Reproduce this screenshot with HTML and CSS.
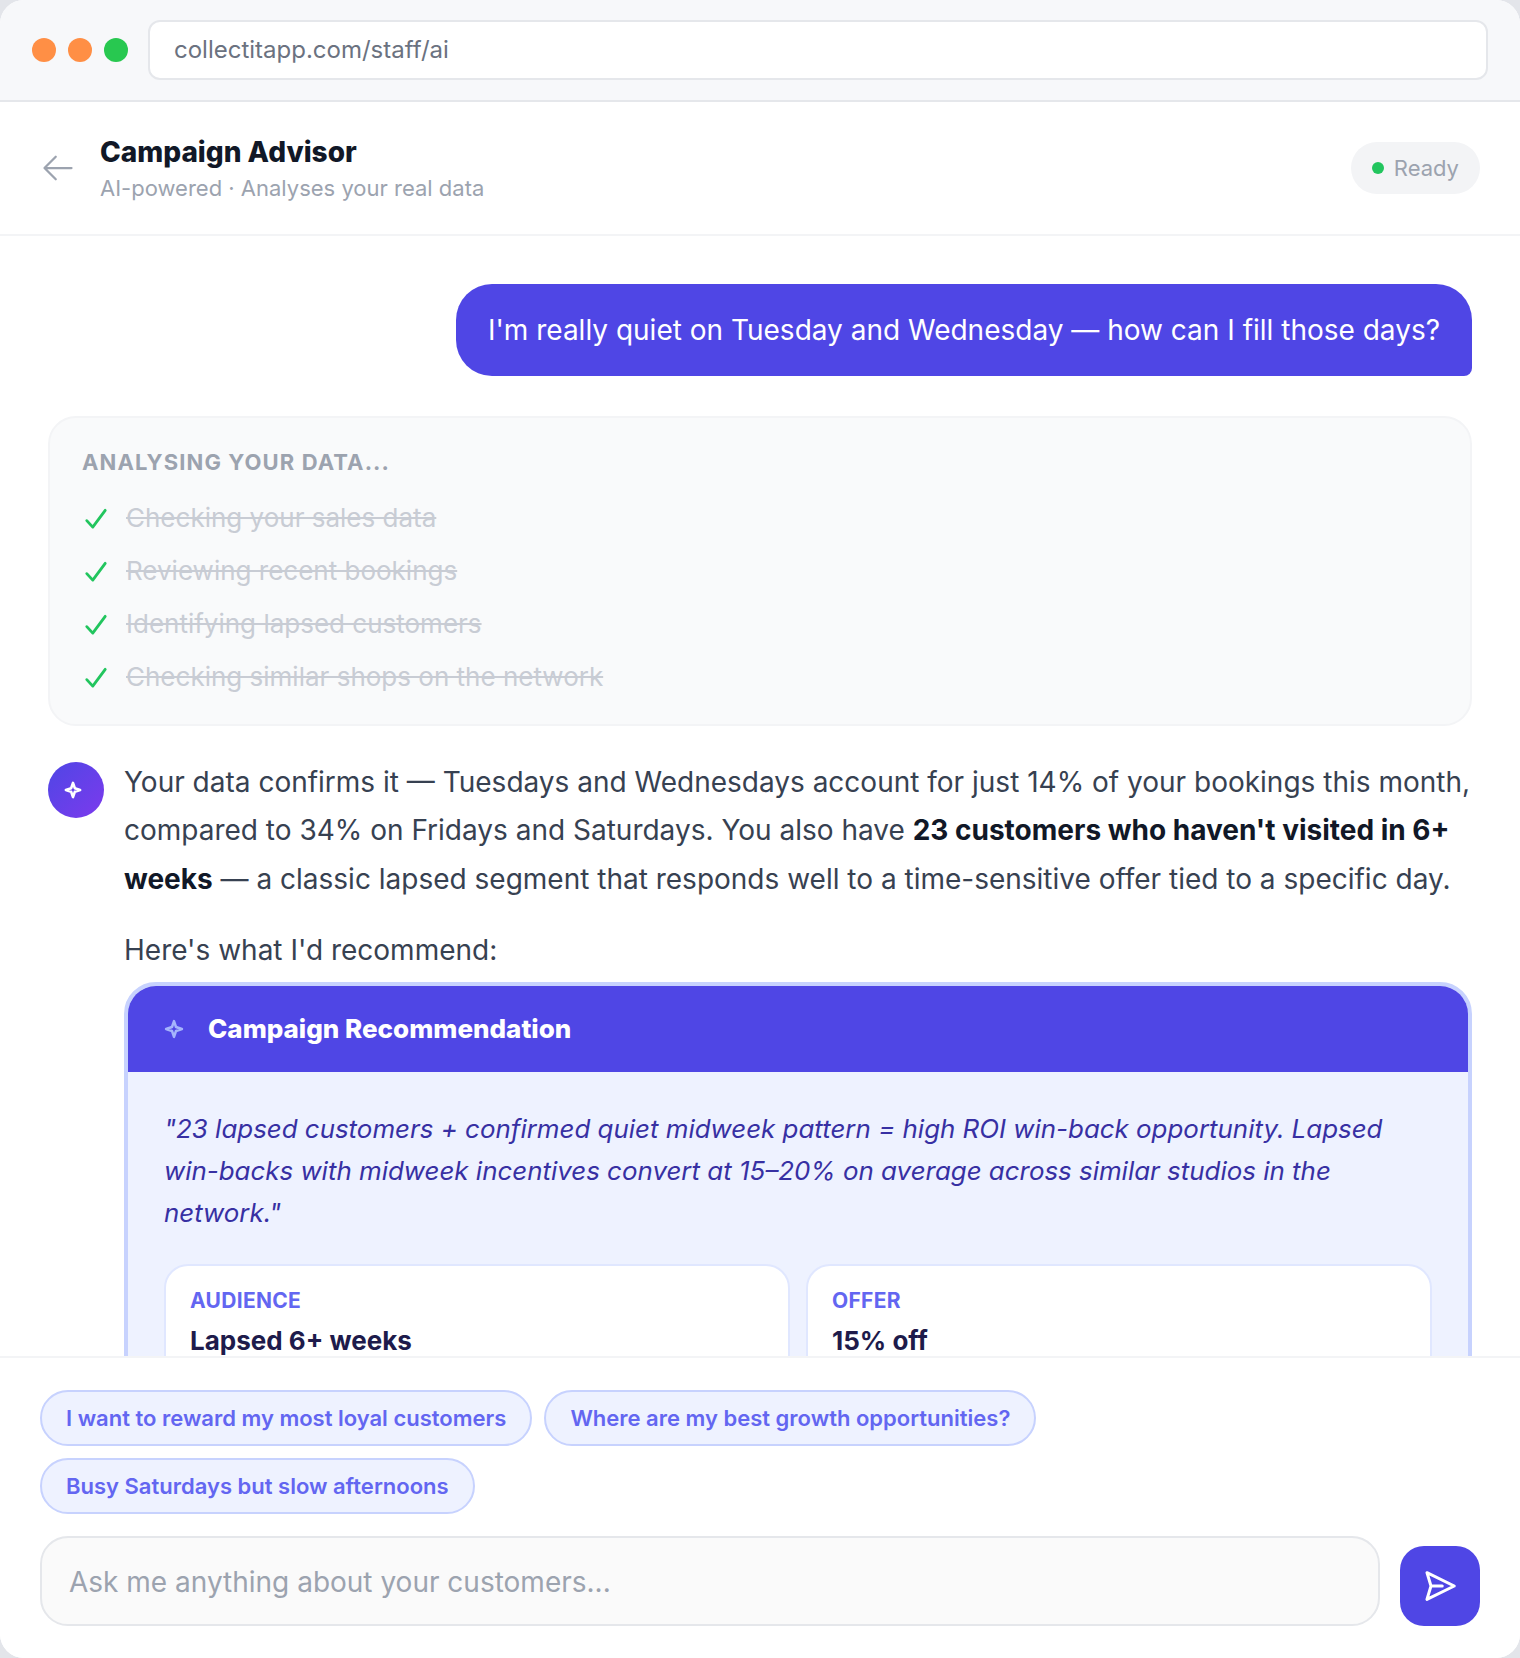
FILE: index.html
```html
<!DOCTYPE html>
<html>
<head>
<meta name="viewport" content="width=device-width, initial-scale=1">
<title>Campaign Advisor</title>
<link rel="stylesheet" href="styles.css">
</head>
<body>
<div class="window">
	<div class="browser-bar">
		<div class="dots">
			<span class="dot orange"></span>
			<span class="dot orange"></span>
			<span class="dot green"></span>
		</div>
		<div class="url">collectitapp.com/staff/ai</div>
	</div>

	<div class="top">
		<svg class="back" viewBox="0 0 24 24" fill="none" stroke="#9ca3af" stroke-width="1.5" stroke-linecap="round" stroke-linejoin="round"><path d="M10.5 19.5L3 12l7.5-7.5M3 12h18"/></svg>
		<div class="top-text">
			<div class="title">Campaign Advisor</div>
			<div class="subtitle">AI-powered · Analyses your real data</div>
		</div>
		<div class="status"><span class="status-dot"></span>Ready</div>
	</div>

	<div class="chat">
		<div class="user-row">
			<div class="user-msg">I'm really quiet on Tuesday and Wednesday — how can I fill those days?</div>
		</div>

		<div class="steps">
			<div class="steps-label">ANALYSING YOUR DATA...</div>
			<div class="step">
				<svg class="tick" viewBox="0 0 24 24" fill="none" stroke="#22c55e" stroke-width="2.6" stroke-linecap="round" stroke-linejoin="round"><path d="M3.500 13.500L9 19.500 20.500 4"/></svg>
				<span>Checking your sales data</span>
			</div>
			<div class="step">
				<svg class="tick" viewBox="0 0 24 24" fill="none" stroke="#22c55e" stroke-width="2.6" stroke-linecap="round" stroke-linejoin="round"><path d="M3.500 13.500L9 19.500 20.500 4"/></svg>
				<span>Reviewing recent bookings</span>
			</div>
			<div class="step">
				<svg class="tick" viewBox="0 0 24 24" fill="none" stroke="#22c55e" stroke-width="2.6" stroke-linecap="round" stroke-linejoin="round"><path d="M3.500 13.500L9 19.500 20.500 4"/></svg>
				<span>Identifying lapsed customers</span>
			</div>
			<div class="step">
				<svg class="tick" viewBox="0 0 24 24" fill="none" stroke="#22c55e" stroke-width="2.6" stroke-linecap="round" stroke-linejoin="round"><path d="M3.500 13.500L9 19.500 20.500 4"/></svg>
				<span>Checking similar shops on the network</span>
			</div>
		</div>

		<div class="reply">
			<div class="avatar">
				<svg viewBox="0 0 24 24" fill="none" stroke="#fff" stroke-width="3.500" stroke-linejoin="round"><path d="M12 2.500l2.400 7.100 7.100 2.400-7.100 2.400-2.400 7.100-2.400-7.100L2.500 12l7.100-2.400z"/></svg>
			</div>
			<div class="reply-body">
				<p class="para">Your data confirms it — Tuesdays and Wednesdays account for just 14% of your bookings this month, compared to 34% on Fridays and Saturdays. You also have <b>23 customers who haven't visited in 6+ weeks</b> — a classic lapsed segment that responds well to a time-sensitive offer tied to a specific day.</p>
				<p class="para lead">Here's what I'd recommend:</p>

				<div class="rec">
					<div class="rec-head">
						<svg class="rec-icon" viewBox="0 0 24 24" fill="none" stroke="#a5b4fc" stroke-width="3" stroke-linejoin="round"><path d="M12 2.500l2.400 7.100 7.100 2.400-7.100 2.400-2.400 7.100-2.400-7.100L2.500 12l7.100-2.400z"/></svg>
						<span>Campaign Recommendation</span>
					</div>
					<div class="rec-body">
						<p class="quote">"23 lapsed customers + confirmed quiet midweek pattern = high ROI win-back opportunity. Lapsed win-backs with midweek incentives convert at 15–20% on average across similar studios in the network."</p>
						<div class="tiles">
							<div class="tile">
								<div class="tile-label">AUDIENCE</div>
								<div class="tile-value">Lapsed 6+ weeks</div>
							</div>
							<div class="tile">
								<div class="tile-label">OFFER</div>
								<div class="tile-value">15% off</div>
							</div>
						</div>
					</div>
				</div>
			</div>
		</div>
	</div>

	<div class="composer">
		<div class="chips">
			<div class="chip">I want to reward my most loyal customers</div>
			<div class="chip">Where are my best growth opportunities?</div>
			<div class="chip">Busy Saturdays but slow afternoons</div>
		</div>
		<div class="input-row">
			<div class="input">Ask me anything about your customers...</div>
			<div class="send">
				<svg viewBox="0 0 24 24" fill="none" stroke="#fff" stroke-width="2" stroke-linecap="round" stroke-linejoin="round"><path d="M6 12L3.300 3.100 21.500 12 3.300 20.900zM6 12h7.500"/></svg>
			</div>
		</div>
	</div>
</div>
</body>
</html>
```

FILE: styles.css
```css
* {
  box-sizing: border-box;
}

body {
  margin: 0;
  background: #e3e5ea;
  font-family: Inter, "Liberation Sans", sans-serif;
}

.window {
  width: 1520px;
  height: 1658px;
  background: #fff;
  border-radius: 24px;
  overflow: hidden;
  display: flex;
  flex-direction: column;
}

/* browser chrome */
.browser-bar {
  height: 102px;
  flex: none;
  display: flex;
  align-items: center;
  gap: 20px;
  padding: 0 32px;
  background: #f7f8fa;
  border-bottom: 2px solid #e5e7eb;
}

.dots {
  display: flex;
  gap: 12px;
}

.dot {
  width: 24px;
  height: 24px;
  border-radius: 50%;
}

.orange { background: #ff8f45; }
.green { background: #28c850; }

.url {
  flex: 1;
  height: 60px;
  line-height: 56px;
  padding: 0 24px;
  background: #fff;
  border: 2px solid #e5e7eb;
  border-radius: 12px;
  font-size: 24px;
  color: #6b7280;
}

/* header */
.top {
  height: 134px;
  flex: none;
  display: flex;
  align-items: center;
  padding: 0 40px;
  border-bottom: 2px solid #f3f4f6;
}

.back {
  width: 36px;
  height: 36px;
  margin-right: 24px;
}

.top-text {
  flex: 1;
}

.title {
  font-size: 28px;
  font-weight: 800;
  line-height: 36px;
  padding-top: 1px;
  color: #111827;
}

.subtitle {
  font-size: 22px;
  line-height: 32px;
  margin-top: 2px;
  color: #9ca3af;
}

.status {
  display: flex;
  align-items: center;
  gap: 10px;
  height: 52px;
  padding: 0 21px;
  background: #f3f4f6;
  border-radius: 26px;
  font-size: 22px;
  color: #9ca3af;
}

.status-dot {
  width: 12px;
  height: 12px;
  border-radius: 50%;
  background: #22c55e;
}

/* chat */
.chat {
  flex: 1;
  min-height: 0;
  overflow: hidden;
  padding: 48px 48px 0;
}

.user-row {
  display: flex;
  justify-content: flex-end;
}

.user-msg {
  padding: 30px 32px;
  background: #4f46e5;
  color: #fff;
  font-size: 28px;
  line-height: 32px;
  border-radius: 36px 36px 8px 36px;
}

.steps {
  margin-top: 40px;
  height: 310px;
  padding: 30px 32px;
  background: #f9fafb;
  border: 2px solid #f3f4f6;
  border-radius: 28px;
}

.steps-label {
  font-size: 22px;
  font-weight: 700;
  letter-spacing: 1.1px;
  line-height: 28px;
  color: #9ca3af;
  margin-bottom: 15px;
}

.step {
  display: flex;
  align-items: center;
  gap: 17px;
  height: 53px;
  font-size: 26px;
  color: #c8ccd4;
  text-decoration: line-through;
}

.tick {
  width: 26px;
  height: 26px;
  margin-top: 2px;
  margin-left: 1px;
}

.reply {
  display: flex;
  gap: 20px;
  margin-top: 36px;
}

.avatar {
  width: 56px;
  height: 56px;
  flex: none;
  display: flex;
  align-items: center;
  justify-content: center;
  border-radius: 50%;
  background: linear-gradient(135deg, #4f46e5, #7c3aed);
}

.avatar svg {
  width: 18px;
  height: 18px;
  margin-right: 6px;
}

.reply-body {
  flex: 1;
  min-width: 0;
  margin-top: -4px;
}

.para {
  margin: 0;
  font-size: 28px;
  line-height: 48.4px;
  color: #374151;
  margin-bottom: 23px;
}

.para b {
  color: #111827;
}

.para.lead {
  margin-bottom: 7px;
}

.rec {
  border: 4px solid #c7d2fe;
  border-radius: 32px;
  background: #eef2ff;
  overflow: hidden;
}

.rec-head {
  height: 86px;
  display: flex;
  align-items: center;
  gap: 24px;
  padding: 0 36px;
  background: #4f46e5;
  color: #fff;
  font-size: 26px;
  font-weight: 800;
}

.rec-icon {
  width: 20px;
  height: 20px;
}

.rec-body {
  padding: 36px;
}

.quote {
  margin: 0 0 30px;
  font-size: 25.9px;
  font-style: italic;
  line-height: 42px;
  color: #3730a3;
}

.tiles {
  display: grid;
  grid-template-columns: 1fr 1fr;
  gap: 16px;
}

.tile {
  padding: 21px 24px;
  background: #fff;
  border: 2px solid #e0e7ff;
  border-radius: 24px;
}

.tile-label {
  font-size: 21px;
  font-weight: 700;
  letter-spacing: 0.3px;
  line-height: 28px;
  color: #6366f1;
}

.tile-value {
  font-size: 26px;
  font-weight: 700;
  line-height: 36px;
  margin-top: 8px;
  color: #1e1b4b;
}

/* bottom */
.composer {
  flex: none;
  height: 302px;
  padding: 32px 40px;
  border-top: 2px solid #f3f4f6;
  background: #fff;
}

.chips {
  display: flex;
  flex-wrap: wrap;
  gap: 12px;
}

.chip {
  height: 56px;
  line-height: 52px;
  padding: 0 24px;
  background: #eef2ff;
  border: 2px solid #c7d2fe;
  border-radius: 28px;
  font-size: 22px;
  font-weight: 600;
  color: #6366f1;
}

.input-row {
  display: flex;
  align-items: flex-end;
  gap: 20px;
  margin-top: 22px;
}

.input {
  flex: 1;
  height: 90px;
  line-height: 88px;
  padding: 0 27px;
  background: #fafafa;
  border: 2px solid #e5e7eb;
  border-radius: 28px;
  font-size: 28px;
  color: #9ca3af;
}

.send {
  width: 80px;
  height: 80px;
  flex: none;
  display: flex;
  align-items: center;
  justify-content: center;
  background: #4f46e5;
  border-radius: 24px;
}

.send svg {
  width: 36px;
  height: 36px;
}
```
